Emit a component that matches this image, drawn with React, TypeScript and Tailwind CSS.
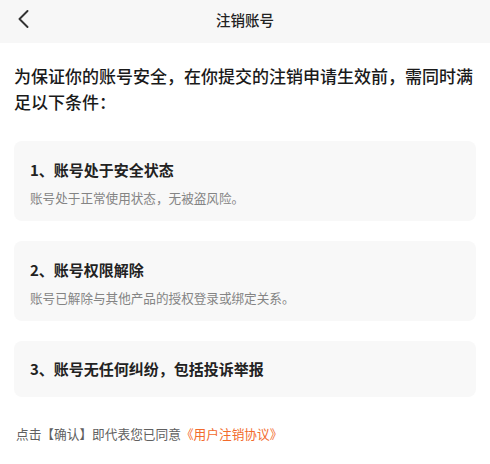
const FONT = '"Noto Sans CJK SC", "Noto Sans", sans-serif';

const items = [
  { title: "1、账号处于安全状态", desc: "账号处于正常使用状态，无被盗风险。" },
  { title: "2、账号权限解除", desc: "账号已解除与其他产品的授权登录或绑定关系。" },
  { title: "3、账号无任何纠纷，包括投诉举报" },
];

function Header() {
  return (
    <div className="relative flex h-[43px] items-center justify-center bg-[#f7f7f7] pb-[4px]">
      <button type="button" className="absolute left-[18px] top-[10px]" aria-label="返回">
        <svg width="11" height="18" viewBox="0 0 11 18" fill="none">
          <polyline
            points="9.5,1 1.5,9 9.5,17"
            stroke="#333"
            strokeWidth="1.9"
            strokeLinecap="round"
            strokeLinejoin="round"
          />
        </svg>
      </button>
      <h1 className="text-[14.5px] font-medium text-[#222]">注销账号</h1>
    </div>
  );
}

export default function App() {
  return (
    <div className="min-h-[464px] w-[490px] bg-white" style={{ fontFamily: FONT }}>
      <Header />
      <div className="px-[14px]">
        <p className="mt-[20px] text-[17px] font-medium leading-[26px] text-[#1a1a1a]">
          为保证你的账号安全，在你提交的注销申请生效前，需同时满足以下条件：
        </p>
        <div className="mt-[26px] flex flex-col gap-[20px]">
          {items.map((it) => (
            <div
              key={it.title}
              className={`rounded-[8px] bg-[#f8f8f8] px-[16px] ${it.desc ? "pb-[14px] pt-[19px]" : "py-[18px]"}`}
            >
              <h2 className="text-[15px] font-bold leading-[20px] text-[#222]">{it.title}</h2>
              {it.desc && (
                <p className="mt-[9px] text-[12.6px] leading-[18px] text-[#848484]">{it.desc}</p>
              )}
            </div>
          ))}
        </div>
        <p className="mt-[28px] px-[2px] text-[12.7px] leading-[18px] text-[#606060]">
          点击【确认】即代表您已同意<span className="text-[#f26b2c]">《用户注销协议》</span>
        </p>
      </div>
    </div>
  );
}
